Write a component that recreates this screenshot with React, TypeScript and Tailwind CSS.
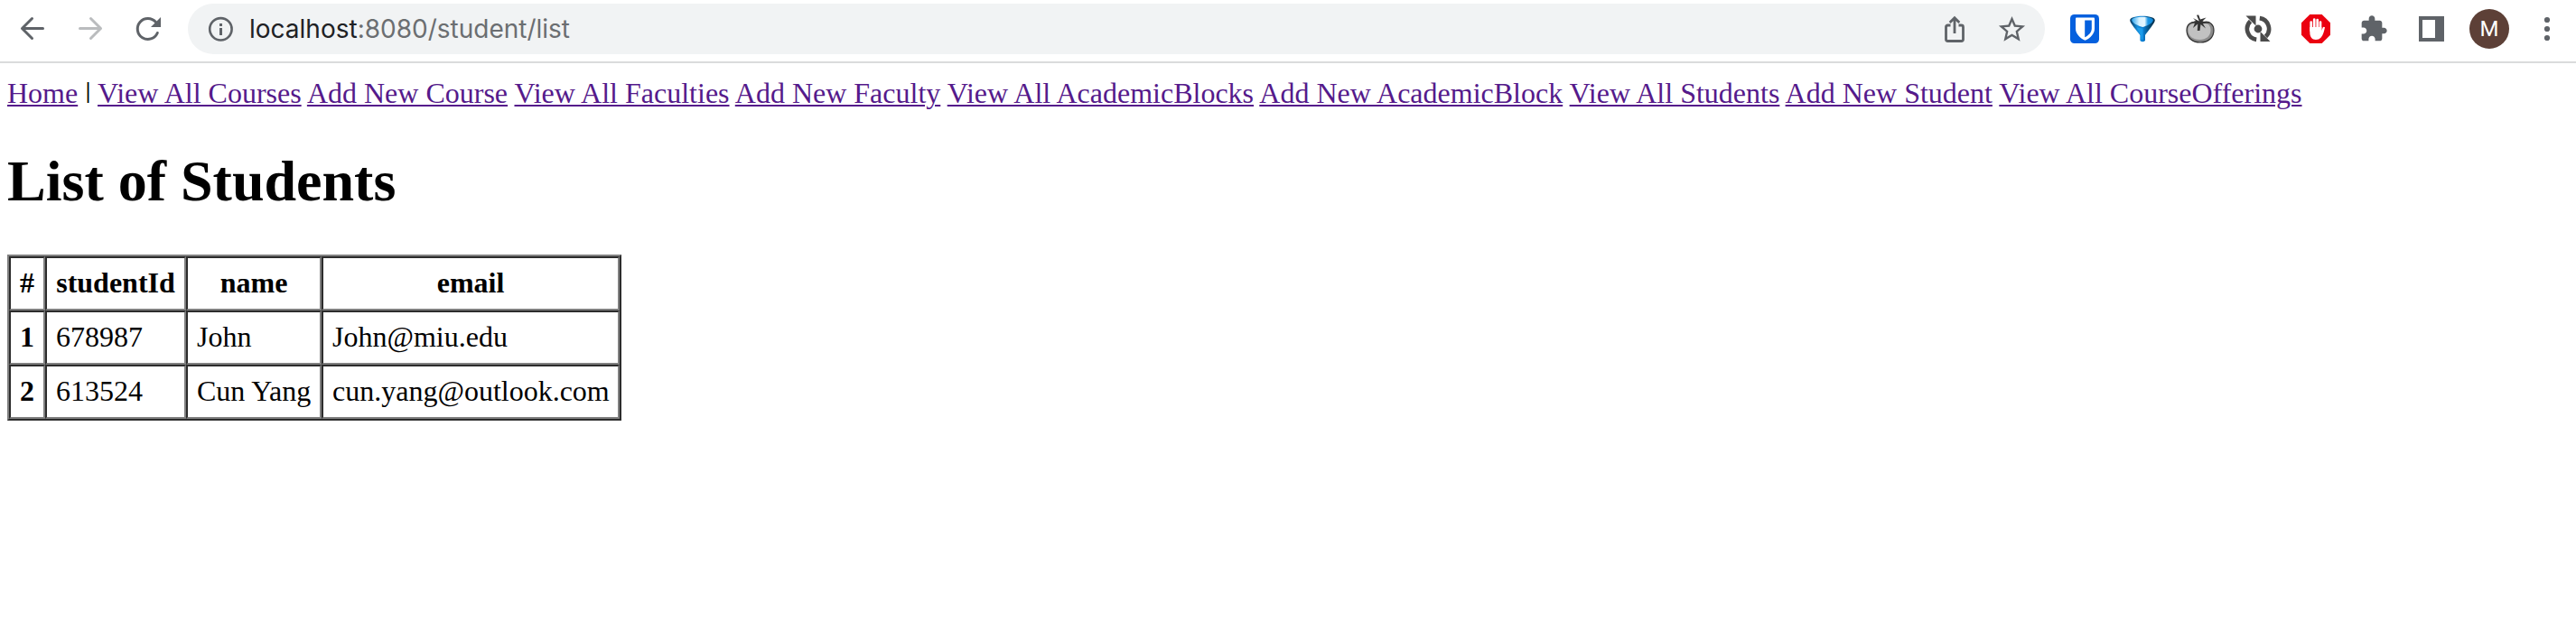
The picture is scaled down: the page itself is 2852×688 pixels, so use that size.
import React from "react";

const links = [
  "View All Courses",
  "Add New Course",
  "View All Faculties",
  "Add New Faculty",
  "View All AcademicBlocks",
  "Add New AcademicBlock",
  "View All Students",
  "Add New Student",
  "View All CourseOfferings",
];

const students = [
  { id: "678987", name: "John", email: "John@miu.edu" },
  { id: "613524", name: "Cun Yang", email: "cun.yang@outlook.com" },
];

const link = "text-[#551a8b] underline decoration-2 underline-offset-2";

const cell =
  "whitespace-nowrap border-2 border-t-[#2c2c2c] border-l-[#2c2c2c] border-r-[#808080] border-b-[#808080] px-2.5 pt-[9px] pb-[11px] leading-9";

function ShieldIcon() {
  return (
    <svg className="h-8 w-8" viewBox="0 0 32 32">
      <rect width="32" height="32" rx="4.500" fill="#0560de" />
      <path d="M6 4.500Q6 3.500 7 3.500H26Q27 3.500 27 4.500V15.500C27 21.500 22.500 26 16.500 28.800C10.500 26 6 21.500 6 15.500Z" fill="#fff" />
      <path d="M16.200 6.500H23.800V15.500C23.800 19.800 20.500 23 16.200 25.300Z" fill="#0560de" />
    </svg>
  );
}

function FunnelIcon() {
  return (
    <svg className="h-8 w-8" viewBox="0 0 32 32">
      <defs>
        <linearGradient id="funnel-body" x1="0" x2="1" y1="0" y2="0">
          <stop offset="0" stopColor="#083a60" />
          <stop offset="0.3" stopColor="#168edb" />
          <stop offset="0.52" stopColor="#0a7fd4" />
          <stop offset="0.75" stopColor="#06507f" />
          <stop offset="1" stopColor="#052a44" />
        </linearGradient>
        <linearGradient id="funnel-top" x1="0" x2="1" y1="0" y2="0">
          <stop offset="0" stopColor="#2ba5ee" />
          <stop offset="0.35" stopColor="#d8f2ff" />
          <stop offset="0.6" stopColor="#e6f7ff" />
          <stop offset="0.75" stopColor="#1b97e6" />
          <stop offset="1" stopColor="#0f86d8" />
        </linearGradient>
      </defs>
      <path d="M2.200 6.500C2.200 0.300 29.800 0.300 29.800 6.500C29.800 9.500 22 18.500 19 23V29Q16 31.500 13.400 29V23C10 18.500 2.200 9.500 2.200 6.500Z" fill="url(#funnel-body)" />
      <path d="M4 6C6 1.800 26 1.800 28 6C27 11 20 12.500 16.500 14C11 12.500 5 10 4 6Z" fill="url(#funnel-top)" />
      <path d="M14.300 24L10 14.500L16.500 15.500V27.500L14.700 28Z" fill="#22a6f2" opacity="0.7" />
    </svg>
  );
}

function TomatoIcon() {
  return (
    <svg className="h-8 w-8" viewBox="0 0 32 32">
      <path d="M1 17.500C1 10.500 6 8 11 8.500C14 9.300 18 9.300 21 8.300C27 7.500 31 11.500 31 17.500C31 25.500 25 31 16 31C7 31 1 25.500 1 17.500Z" fill="#8a8a8a" stroke="#303030" strokeWidth="1.200" />
      <path d="M2.500 17C2.500 11.500 7 9.500 11 10C14 11 18 11 21 10C25 9.500 27.500 13 27.500 17C27.500 24 22.500 28 15.500 28C8 28 2.500 24 2.500 17Z" fill="#c1c1c1" />
      <path d="M14.800 7.500L12 0.800L14.200 0.500L16 5.500L22.500 3.500L18.500 7.500L27 9.500L18.800 10L22 15.500L16.500 11L15.500 18L12.800 18L13.200 10.500L8 15L10 9.500L5 9.500L11 7L8 4Z" fill="#333" />
    </svg>
  );
}

function CycleIcon() {
  return (
    <svg className="h-8 w-8" viewBox="-16 -16 32 32">
      <path d="M-8.500 -8.500A12 12 0 0 0 -1.800 11.900M8.500 8.500A12 12 0 0 0 1.800 -11.900" fill="none" stroke="#4b4b4b" strokeWidth="4.600" />
      <path d="M-13.500 -14.500H-2.500V-3.500ZM13.500 14H2.500V3Z" fill="#4b4b4b" />
      <circle r="4.400" fill="#4b4b4b" />
    </svg>
  );
}

function StopHandIcon() {
  return (
    <svg className="h-8 w-8" viewBox="0 0 32 32">
      <path d="M9.300 0H22.700L32 9.300V22.700L22.700 32H9.300L0 22.700V9.300Z" fill="#eb0010" />
      <path d="M10.700 18V8.500M14.200 16V5.700M17.700 16V6M21 17V8.500" stroke="#fff" strokeWidth="2.700" strokeLinecap="round" />
      <path d="M9.350 14H22.350V18L23.700 14.500Q24.500 13 26 14.200C25 19 24 23 21.500 25.800Q19.500 28 16 28C11.500 28 9.350 24.500 9.350 20Z" fill="#fff" />
    </svg>
  );
}

function PuzzleIcon() {
  return (
    <svg className="h-8 w-8" viewBox="0 0 24 24" fill="#5f6368">
      <path d="M20.500 11H19V7c0-1.100-.9-2-2-2h-4V3.500C13 2.120 11.880 1 10.500 1S8 2.120 8 3.500V5H4c-1.100 0-1.990.9-1.990 2v3.800H3.500c1.490 0 2.700 1.210 2.700 2.700s-1.210 2.700-2.700 2.700H2V20c0 1.100.9 2 2 2h3.800v-1.500c0-1.490 1.210-2.700 2.700-2.700 1.490 0 2.700 1.210 2.700 2.700V22H17c1.100 0 2-.9 2-2v-4h1.500c1.380 0 2.500-1.120 2.500-2.500S21.880 11 20.500 11z" />
    </svg>
  );
}

function Toolbar() {
  return (
    <header className="flex h-[70px] items-start border-b-2 border-[#dadbdc] bg-white font-['Inter',sans-serif]">
      <div className="flex h-16 w-[208px] shrink-0 items-center">
        <svg className="ml-4 h-10 w-10" viewBox="0 0 40 40" fill="none" stroke="#5f6368" strokeWidth="3" strokeLinecap="round" strokeLinejoin="round">
          <path d="M31.500 19.500H8.500M19.500 8.500L8.500 19.500L19.500 30.500" />
        </svg>
        <svg className="ml-6 h-10 w-10" viewBox="0 0 40 40" fill="none" stroke="#babcbe" strokeWidth="3" strokeLinecap="round" strokeLinejoin="round">
          <path d="M8.500 19.500H31.500M20.500 8.500L31.500 19.500L20.500 30.500" />
        </svg>
        <svg className="ml-6 h-10 w-10" viewBox="0 0 40 40" fill="none">
          <path d="M30.300 24.500A11.500 11.500 0 1 1 28.500 12.500" stroke="#5f6368" strokeWidth="3" strokeLinecap="round" />
          <path d="M34 7V18H23Z" fill="#5f6368" />
        </svg>
      </div>
      <div className="mt-1 flex h-14 w-[2056px] shrink-0 items-center rounded-full bg-[#f1f3f4]">
        <svg className="ml-[22px] h-7 w-7" viewBox="0 0 28 28" fill="none">
          <circle cx="14.400" cy="14.300" r="12.200" stroke="#5f6368" strokeWidth="2.600" />
          <path d="M14.500 13V21M14.500 8V11" stroke="#5f6368" strokeWidth="3" />
        </svg>
        <span className="ml-[18px] grow text-[28px] leading-8 text-[#6b6e71]">
          <span className="text-[#202124]">localhost</span>:8080/student/list
        </span>
        <svg className="h-8 w-8" viewBox="0 0 32 32" fill="none" stroke="#5f6368" strokeWidth="2.800" strokeLinejoin="round">
          <path d="M11.500 12H8.500Q6.500 12 6.500 14V27.500Q6.500 29.500 8.500 29.500H23.500Q25.500 29.500 25.500 27.500V14Q25.500 12 23.500 12H20.500" />
          <path d="M16 21V4M10.700 9L16 3.700L21.300 9" strokeLinejoin="miter" />
        </svg>
        <svg className="mr-[19px] ml-[30px] h-[35px] w-[35px]" viewBox="0 0 24 24" fill="#5f6368">
          <path d="M22 9.240l-7.190-.62L12 2 9.190 8.630 2 9.240l5.460 4.730L5.820 21 12 17.270 18.180 21l-1.630-7.030L22 9.240zM12 15.400l-3.760 2.270 1-4.280-3.320-2.880 4.380-.38L12 6.100l1.710 4.040 4.380.38-3.320 2.880 1 4.280L12 15.400z" />
        </svg>
      </div>
      <div className="ml-3 grid h-16 w-[576px] shrink-0 grid-cols-9 place-items-center">
        <ShieldIcon />
        <FunnelIcon />
        <TomatoIcon />
        <CycleIcon />
        <StopHandIcon />
        <PuzzleIcon />
        <svg className="h-7 w-7" viewBox="0 0 28 28">
          <path d="M0 0H28V28H0ZM4 4V24H18V4Z" fill="#5f6368" fillRule="evenodd" />
        </svg>
        <span className="flex h-11 w-11 items-center justify-center rounded-full bg-[#5d4037] font-['Roboto',sans-serif] text-[24px] leading-none text-white">
          M
        </span>
        <svg className="h-8 w-8" viewBox="0 0 32 32" fill="#5f6368">
          <circle cx="16" cy="6" r="3.100" />
          <circle cx="16" cy="16" r="3.100" />
          <circle cx="16" cy="26" r="3.100" />
        </svg>
      </div>
    </header>
  );
}

export default function App() {
  return (
    <div className="h-[688px] w-[2852px] overflow-hidden bg-white font-['Liberation_Serif',serif] text-[32px] leading-9 text-black">
      <Toolbar />
      <main className="px-2 pt-[15px]">
        <nav className="h-9 whitespace-nowrap">
          <a href="#" className={link}>Home</a>{" "}
          <span className="inline-block w-[6.400px] -translate-y-[5px] text-center text-[25px] leading-6 font-bold">|</span>{" "}
          {links.map((l) => (
            <React.Fragment key={l}>
              <a href="#" className={link}>{l}</a>{" "}
            </React.Fragment>
          ))}
        </nav>
        <h1 className="mt-[43px] text-[64px] leading-[74px] font-bold">List of Students</h1>
        <table className="mt-11 w-[680px] table-fixed border-separate border-spacing-0 border-2 border-t-[#808080] border-l-[#808080] border-r-[#2c2c2c] border-b-[#2c2c2c]">
          <colgroup>
            <col className="w-10" />
            <col className="w-[156px]" />
            <col className="w-[150px]" />
            <col className="w-[330px]" />
          </colgroup>
          <thead>
            <tr>
              {["#", "studentId", "name", "email"].map((h) => (
                <th key={h} className={cell}>{h}</th>
              ))}
            </tr>
          </thead>
          <tbody>
            {students.map((s, i) => (
              <tr key={s.id}>
                <th className={cell}>{i + 1}</th>
                <td className={cell}>{s.id}</td>
                <td className={cell}>{s.name}</td>
                <td className={cell}>{s.email}</td>
              </tr>
            ))}
          </tbody>
        </table>
      </main>
    </div>
  );
}
